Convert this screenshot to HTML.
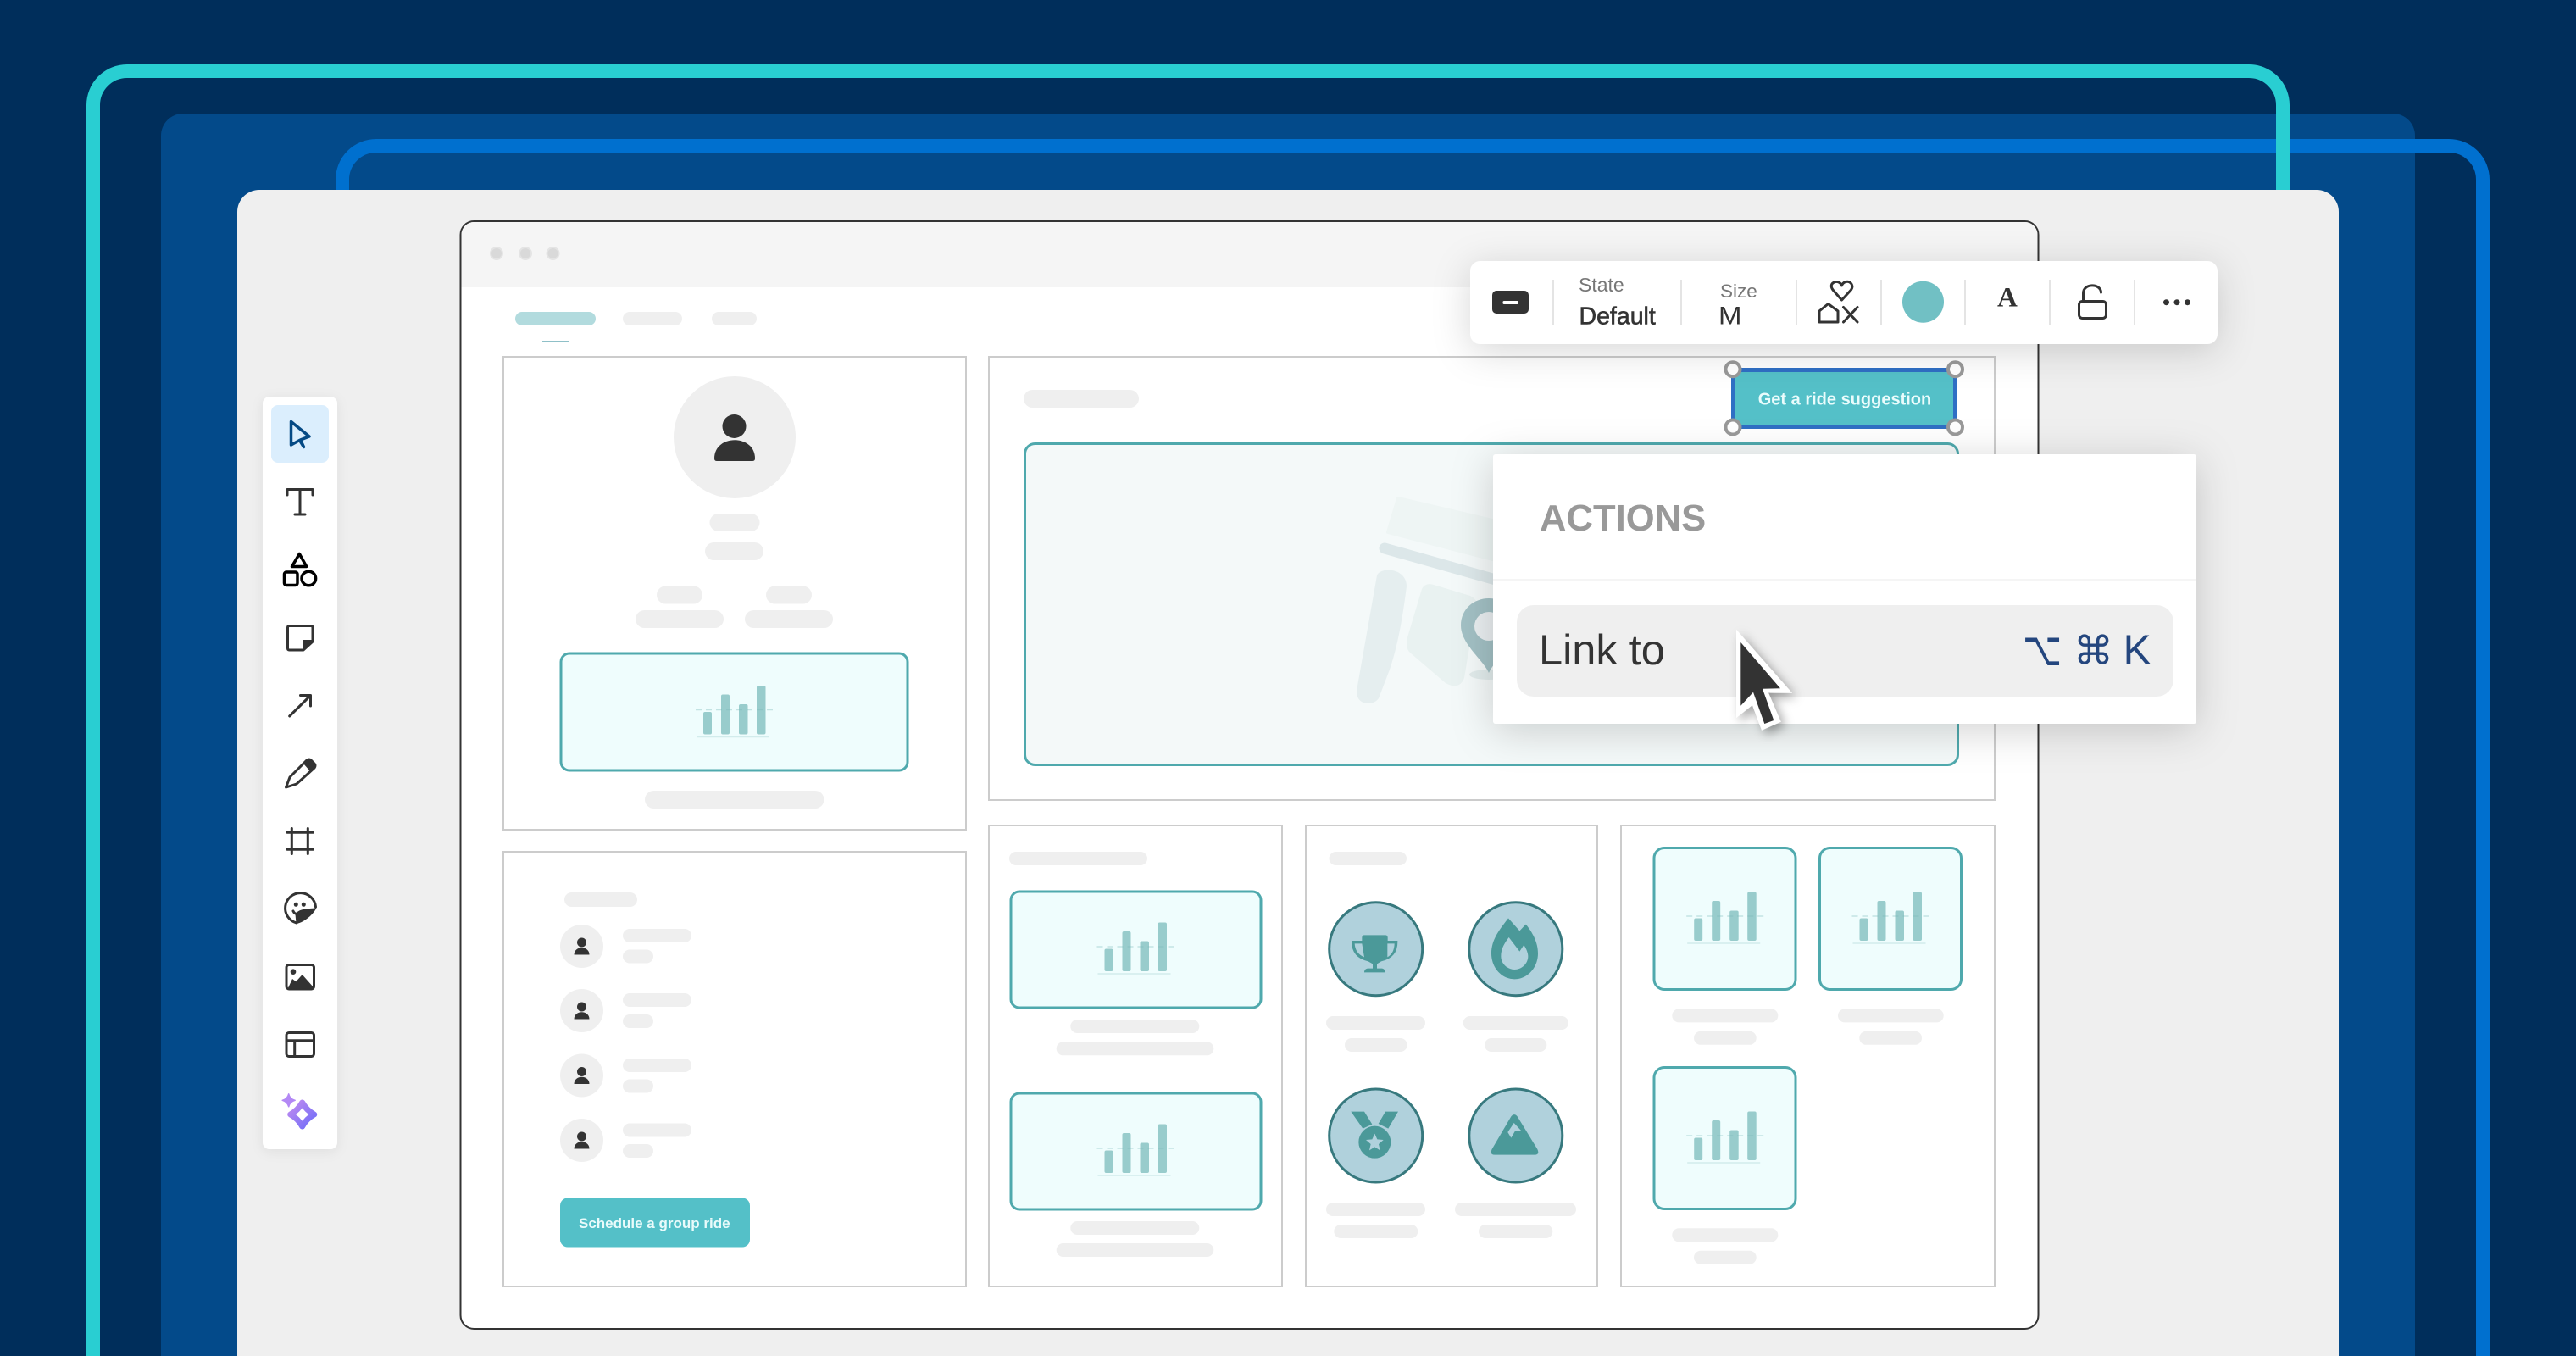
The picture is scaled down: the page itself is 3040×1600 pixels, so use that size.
<!DOCTYPE html>
<html lang="en">
<head>
<meta charset="utf-8">
<title>Wireframe editor</title>
<style>
html,body{margin:0;padding:0;background:#002e5b;width:3040px;height:1600px;overflow:hidden}
svg{display:block;font-family:"Liberation Sans",sans-serif}
.p{fill:#efefef}
.box{fill:#effdfd;stroke:#4fa9ad;stroke-width:3}
.pn{fill:#fff;stroke:#ccc;stroke-width:2}
.ic{fill:none;stroke:#333;stroke-width:3;stroke-linecap:round;stroke-linejoin:round}
.b{fill:#b0d1dc;stroke:#37797e;stroke-width:3}
.bi{fill:#4b9999}
.h{fill:#fff;stroke:#999;stroke-width:4}
</style>
</head>
<body>
<svg xmlns="http://www.w3.org/2000/svg" width="3040" height="1600" viewBox="0 0 3040 1600">
<defs>
<filter id="s1" x="-20%" y="-60%" width="140%" height="220%"><feDropShadow dx="0" dy="8" stdDeviation="22" flood-color="#000" flood-opacity=".16"/></filter>
<filter id="s2" x="-20%" y="-30%" width="140%" height="160%"><feDropShadow dx="0" dy="8" stdDeviation="24" flood-color="#000" flood-opacity=".18"/></filter>
<filter id="s3" x="-40%" y="-5%" width="180%" height="110%"><feDropShadow dx="0" dy="3" stdDeviation="7" flood-color="#000" flood-opacity=".07"/></filter>
<filter id="s4" x="-50%" y="-50%" width="200%" height="200%"><feDropShadow dx="5" dy="5" stdDeviation="6" flood-color="#000" flood-opacity=".35"/></filter>
<linearGradient id="g" x1="0" y1="0" x2="1" y2="1"><stop offset="0" stop-color="#c08cf0"/><stop offset="1" stop-color="#6f6cf8"/></linearGradient>
<g id="chart">
<rect x="-36.5" y="0" width="10" height="26.5" rx="2" fill="#98cccc"/>
<rect x="-15.5" y="-20.5" width="10" height="47" rx="2" fill="#98cccc"/>
<rect x="5.5" y="-9" width="10.5" height="35.5" rx="2" fill="#98cccc"/>
<rect x="26.5" y="-31" width="10.5" height="57.5" rx="2" fill="#98cccc"/>
<path d="M-45.5 -2.5H46" stroke="#79b9b9" stroke-opacity=".38" stroke-width="1.5" stroke-dasharray="7 5" fill="none"/>
<path d="M-44.5 29.5H41.5" stroke="#d2ecec" stroke-width="1.5" fill="none"/>
</g>
<g id="av">
<circle cx="0" cy="0" r="25.5" class="p" />
<circle cx="0" cy="-4.5" r="5.5" fill="#333"/>
<path d="M-9 10C-9 -1 9 -1 9 10Z" fill="#333"/>
</g>
</defs>

<rect width="3040" height="1600" fill="#002e5b"/>
<path d="M190 1600V160a26 26 0 0 1 26-26H2824a26 26 0 0 1 26 26V1600Z" fill="#034a8a"/>
<path d="M404 1600V212a40 40 0 0 1 40-40H2890a40 40 0 0 1 40 40V1600" fill="none" stroke="#0070cf" stroke-width="16"/>
<path d="M110 1600V124a40 40 0 0 1 40-40H2654a40 40 0 0 1 40 40V1600" fill="none" stroke="#29ced2" stroke-width="16"/>
<path d="M280 1600V250a26 26 0 0 1 26-26H2734a26 26 0 0 1 26 26V1600Z" fill="#efefef"/>

<!-- browser window -->
<rect x="543.5" y="261" width="1862" height="1307" rx="16" fill="#fff" stroke="#333" stroke-width="2"/>
<path d="M544.5 339V277a15 15 0 0 1 15-15H2389.5a15 15 0 0 1 15 15V339Z" fill="#f5f5f5"/>
<g fill="#d9d9d9" stroke="#e4e4e4" stroke-width="2"><circle cx="586" cy="299" r="7"/><circle cx="620" cy="299" r="7"/><circle cx="652.5" cy="299" r="7"/></g>
<rect x="608" y="368" width="95" height="16" rx="8" fill="#b2dbde"/>
<rect x="735" y="368" width="70" height="16" rx="8" class="p"/>
<rect x="840" y="368" width="53" height="16" rx="8" class="p"/>
<rect x="640" y="402" width="32" height="2" fill="#8fc0c8"/>

<!-- panel 1 -->
<rect x="594" y="421" width="546" height="558" class="pn"/>
<circle cx="867" cy="516" r="72" class="p"/>
<circle cx="866.5" cy="503" r="14" fill="#333"/>
<path d="M843 541C843 512 891 512 891 541Q891 544 888 544H846Q843 544 843 541Z" fill="#333"/>
<rect x="837.5" y="606" width="59" height="21" rx="10.5" class="p"/>
<rect x="832" y="640" width="69" height="21" rx="10.5" class="p"/>
<rect x="775" y="691.5" width="54" height="21" rx="10.5" class="p"/>
<rect x="904" y="691.5" width="54" height="21" rx="10.5" class="p"/>
<rect x="750" y="720" width="104" height="21" rx="10.5" class="p"/>
<rect x="879" y="720" width="104" height="21" rx="10.5" class="p"/>
<rect x="662" y="771" width="409" height="138" rx="10" class="box"/>
<use href="#chart" x="866.5" y="840"/>
<rect x="761" y="933" width="211.5" height="21" rx="10.5" class="p"/>

<!-- panel 2 -->
<rect x="594" y="1005" width="546" height="513" class="pn"/>
<rect x="666" y="1053" width="86" height="17" rx="8.5" class="p"/>
<use href="#av" x="686.5" y="1116.5"/>
<use href="#av" x="686.5" y="1192.5"/>
<use href="#av" x="686.5" y="1269"/>
<use href="#av" x="686.5" y="1345.5"/>
<rect x="735" y="1096" width="81" height="16" rx="8" class="p"/><rect x="735" y="1120.5" width="36" height="16" rx="8" class="p"/>
<rect x="735" y="1172" width="81" height="16" rx="8" class="p"/><rect x="735" y="1197" width="36" height="16" rx="8" class="p"/>
<rect x="735" y="1249" width="81" height="16" rx="8" class="p"/><rect x="735" y="1273.5" width="36" height="16" rx="8" class="p"/>
<rect x="735" y="1325.5" width="81" height="16" rx="8" class="p"/><rect x="735" y="1350" width="36" height="16" rx="8" class="p"/>
<rect x="661" y="1413.5" width="224" height="58" rx="9" fill="#54c0c8"/>
<text x="683" y="1449" font-size="17" font-weight="700" fill="#e9fbfb">Schedule a group ride</text>

<!-- panel 3 -->
<rect x="1167" y="421" width="1187" height="523" class="pn"/>
<rect x="1208" y="460" width="136" height="21" rx="10.5" class="p"/>
<rect x="1209.5" y="523.5" width="1101" height="379" rx="12" fill="#f4f9f9" stroke="#4fa9ad" stroke-width="3"/>
<path d="M1650 588L1638 628L1761 660V614Z" fill="#eef5f4" stroke="#eef5f4" stroke-width="4" stroke-linejoin="round"/>
<path d="M1634 647L1765 684" stroke="#dce7e9" stroke-width="13" stroke-linecap="round"/>
<path d="M1625 679C1628 669 1660 669 1660 692C1655 730 1650 760 1640 790L1627 824C1620 834 1600 832 1601 815Z" fill="#e5eeef"/>
<path d="M1678 695Q1682 687 1692 690L1735 703Q1745 708 1742 716L1728 800Q1722 815 1706 806L1664 770Q1658 764 1661 752Z" fill="#e9f2f1"/>
<ellipse cx="1757" cy="796" rx="23" ry="6" fill="#e1ebeb"/>
<path d="M1757 794C1750 778 1724 760 1724 738C1724 718 1740 706 1757 706C1774 706 1790 718 1790 738C1790 760 1764 778 1757 794Z" fill="#a2c0c4"/>
<circle cx="1757" cy="739" r="17" fill="#e9eef0"/>

<!-- panel 4 -->
<rect x="1167" y="974" width="346" height="544" class="pn"/>
<rect x="1191" y="1005" width="163" height="16" rx="8" class="p"/>
<rect x="1193" y="1052" width="295" height="137" rx="10" class="box"/>
<use href="#chart" x="1340" y="1119.5"/>
<rect x="1263.3" y="1203" width="152" height="16" rx="8" class="p"/>
<rect x="1246.7" y="1229.3" width="185.6" height="16" rx="8" class="p"/>
<rect x="1193" y="1290" width="295" height="137" rx="10" class="box"/>
<use href="#chart" x="1340" y="1357.5"/>
<rect x="1263.3" y="1441" width="152" height="16" rx="8" class="p"/>
<rect x="1246.7" y="1467" width="185.6" height="16" rx="8" class="p"/>

<!-- panel 5 -->
<rect x="1541" y="974" width="344" height="544" class="pn"/>
<rect x="1568.5" y="1005" width="91.5" height="16" rx="8" class="p"/>
<circle cx="1623.7" cy="1119.7" r="55" class="b"/>
<circle cx="1788.8" cy="1119.7" r="55" class="b"/>
<circle cx="1623.7" cy="1340" r="55" class="b"/>
<circle cx="1788.8" cy="1340" r="55" class="b"/>
<g transform="translate(1530 1030) scale(.33333)">
<path class="bi" d="M240 220H315Q322 220 323 228V240H358Q360 300 300 313L285 322V338H303Q314 340 314 352H240Q240 340 252 338H270V322L254 313Q194 300 195 240H232V228Q233 220 240 220ZM232 250H206Q208 285 240 298ZM322 250V298Q346 285 347 250Z" fill-rule="evenodd"/>
<path class="bi" d="M750 160L790 205L812 182C835 210 855 245 855 285C855 335 818 376 772 376C726 376 690 335 690 285C690 235 720 200 750 160Z"/>
<path fill="#b0d1dc" d="M752 228L790 278L805 255C815 270 820 285 820 295C820 320 798 342 772 342C746 342 724 320 724 295C724 270 735 250 752 228Z"/>
<path class="bi" d="M193 845H240L268 890L235 905ZM315 845H360L325 905L290 888Z"/>
<circle class="bi" cx="277" cy="953" r="57"/>
<path fill="#b0d1dc" d="M277 923L286 943L308 945L291 960L296 982L277 970L258 982L263 960L246 945L268 943Z"/>
<path class="bi" d="M760 862Q771 849 782 862L853 978Q862 998 843 998H702Q683 998 692 978Z"/>
<path fill="#b0d1dc" d="M770 885L795 912H775L760 938L748 918Z"/>
</g>
<rect x="1565" y="1199" width="117" height="16" rx="8" class="p"/><rect x="1587" y="1225" width="73.7" height="16" rx="8" class="p"/>
<rect x="1726.7" y="1199" width="124.3" height="16" rx="8" class="p"/><rect x="1752" y="1225" width="73.3" height="16" rx="8" class="p"/>
<rect x="1565" y="1419" width="117" height="16" rx="8" class="p"/><rect x="1574.3" y="1445" width="99" height="16" rx="8" class="p"/>
<rect x="1717" y="1419" width="143" height="16" rx="8" class="p"/><rect x="1745" y="1445" width="87.3" height="16" rx="8" class="p"/>

<!-- panel 6 -->
<rect x="1913" y="974" width="441" height="544" class="pn"/>
<rect x="1952" y="1000.5" width="167" height="167" rx="12" class="box"/>
<use href="#chart" x="2035.7" y="1083.5"/>
<rect x="2147.5" y="1000.5" width="167" height="167" rx="12" class="box"/>
<use href="#chart" x="2231" y="1083.5"/>
<rect x="1952" y="1259.5" width="167" height="167" rx="12" class="box"/>
<use href="#chart" x="2035.7" y="1342.5"/>
<rect x="1973.3" y="1190.4" width="125" height="16" rx="8" class="p"/><rect x="1999" y="1216.8" width="73.7" height="16" rx="8" class="p"/>
<rect x="2169" y="1190.4" width="124.7" height="16" rx="8" class="p"/><rect x="2194.3" y="1216.8" width="73.7" height="16" rx="8" class="p"/>
<rect x="1973.3" y="1449.3" width="125" height="16" rx="8" class="p"/><rect x="1999" y="1475.7" width="73.7" height="16" rx="8" class="p"/>

<!-- selected button -->
<rect x="2045.5" y="436.5" width="262" height="67" fill="#54c0c8" stroke="#2f6fc4" stroke-width="5"/>
<text x="2177" y="477.5" text-anchor="middle" font-size="20" font-weight="700" fill="#eafcfc">Get a ride suggestion</text>
<circle cx="2045" cy="435.7" r="8.5" class="h"/>
<circle cx="2307.5" cy="435.7" r="8.5" class="h"/>
<circle cx="2045" cy="504" r="8.5" class="h"/>
<circle cx="2307.5" cy="504" r="8.5" class="h"/>

<!-- context toolbar -->
<rect x="1735" y="308" width="882" height="98" rx="12" fill="#fff" filter="url(#s1)"/>
<rect x="1761" y="343" width="43" height="27" rx="5" fill="#333"/>
<rect x="1773.5" y="355" width="18.5" height="4" rx="1.5" fill="#fff"/>
<g fill="#e4e4e4"><rect x="1832" y="330" width="2" height="54"/><rect x="1983" y="330" width="2" height="54"/><rect x="2119" y="330" width="2" height="54"/><rect x="2219" y="330" width="2" height="54"/><rect x="2318" y="330" width="2" height="54"/><rect x="2418" y="330" width="2" height="54"/><rect x="2518" y="330" width="2" height="54"/></g>
<text x="1863" y="344" font-size="23" fill="#777">State</text>
<text x="1863.5" y="382.5" font-size="28.5" fill="#333" stroke="#333" stroke-width=".6">Default</text>
<text x="2030" y="351" font-size="22.5" fill="#777">Size</text>
<text transform="translate(2028 382.5) scale(1.1 1)" x="0" y="0" font-size="30" fill="#333" font-weight="400">M</text>
<path class="ic" stroke-width="3.5" d="M2173.5 354L2163 342C2158 335 2165 331 2170 333C2172 334 2173.5 336 2173.5 337C2174 335 2176 333 2178 332.5C2184 331 2188 337 2184.5 342Z"/>
<path class="ic" d="M2147 380V367L2157.5 358.5L2169 367V380Z"/>
<path class="ic" d="M2175.5 362.5L2192 380M2192 362.5L2175.5 380"/>
<circle cx="2269.5" cy="356.3" r="24.5" fill="#71c0c4"/>
<text x="2357" y="361.7" font-family="'Liberation Serif',serif" font-size="33" font-weight="700" fill="#333">A</text>
<rect x="2453.5" y="355.5" width="32" height="20" rx="4" class="ic"/>
<path class="ic" d="M2458.5 355V346C2458.5 334 2479 334 2479.5 345"/>
<g fill="#333"><circle cx="2556.5" cy="356.7" r="3.5"/><circle cx="2569" cy="356.7" r="3.5"/><circle cx="2581.5" cy="356.7" r="3.5"/></g>

<!-- actions popup -->
<rect x="1762" y="536" width="830" height="318" rx="3" fill="#fff" filter="url(#s2)"/>
<text x="1817" y="626" font-size="43.600" font-weight="700" fill="#999">ACTIONS</text>
<rect x="1762" y="683" width="830" height="3" fill="#f5f5f5"/>
<rect x="1790" y="714" width="775" height="108" rx="20" fill="#efefef"/>
<text x="1816" y="784" font-size="50.500" fill="#333">Link to</text>
<text transform="translate(2387 785) scale(.85 1.2)" x="0" y="0" font-family="'DejaVu Sans',sans-serif" font-size="47" fill="#24467e">⌥</text>
<text x="2447" y="784" font-family="'DejaVu Sans',sans-serif" font-size="47" fill="#24467e">⌘</text>
<text x="2505.5" y="784" font-size="50" fill="#24467e">K</text>

<!-- mouse cursor -->
<path d="M2049 742.7V847L2068 832L2079 861.7L2101.7 851.7L2087 817.5L2115 817.7Z" fill="#fff" filter="url(#s4)"/>
<path d="M2054.3 758V832.7L2069 816.7L2082.3 854L2093.3 850L2080 812.7L2101 812.3Z" fill="#333"/>

<!-- left tool rail -->
<rect x="310" y="468" width="88" height="888" rx="8" fill="#fff" filter="url(#s3)"/>
<rect x="320" y="478" width="68" height="68" rx="8" fill="#dbeefd"/>
<path d="M343.5 497.5L365 515L354.5 519L358.5 527.5L353.5 519.5L343.5 525Z" fill="none" stroke="#054a85" stroke-width="3.5" stroke-linejoin="round" stroke-linecap="round"/>
<path class="ic" d="M339 584V577.5H369V584M354 577.5V607M348 607H360"/>
<g fill="none" stroke="#000" stroke-width="3.5" stroke-linejoin="round">
<path d="M353.3 653.5L361.7 668.5H344.5Z"/>
<rect x="335.5" y="675" width="15.5" height="15.5" rx="2.5"/>
<circle cx="364.3" cy="682.5" r="8.3"/>
</g>
<path class="ic" stroke-width="3.5" d="M369 757V740.5Q369 738.5 367 738.5H341.500Q339.5 738.5 339.5 740.5V765Q339.5 767 341.5 767H358Z"/>
<path d="M369 756L358 767V756Z" fill="#333" stroke="#333" stroke-width="2" stroke-linejoin="round"/>
<path class="ic" d="M341.7 845L366 821M354.5 820.5H366.5V833"/>
<path class="ic" d="M337.5 929L342 917L362 897Q365 895 367 897L371 901Q373 903 371 906L350 925Z"/>
<path d="M362 897Q365 895 367 897L371 901Q373 903 371 906L366 910L358 901Z" fill="#333"/>
<path class="ic" stroke-width="3.500" d="M339 982.3H369.5M339 1002.3H369.5M344.3 977.5V1007.5M363.3 977.5V1007.5"/>
<path class="ic" d="M372.5 1070A18 18 0 1 0 350 1089"/>
<path d="M372.7 1071.7C365 1073 353 1072 349 1079L350 1089.500C358 1088 368 1080 372.7 1071.7Z" fill="#333" stroke="#333" stroke-linejoin="round"/>
<circle cx="349.3" cy="1067.3" r="2.5" fill="#333"/><circle cx="358.3" cy="1067.3" r="2.5" fill="#333"/>
<path class="ic" d="M346 1075Q348 1079 350.5 1078"/>
<rect x="338" y="1138.500" width="32.5" height="28.5" rx="3" class="ic"/>
<circle cx="346" cy="1146.7" r="3.3" fill="#333"/>
<path d="M339.5 1166.7L345 1155L349.3 1158.3L356.7 1150L370 1165V1167Z" fill="#333"/>
<rect x="338" y="1218.5" width="32.5" height="28" rx="3" class="ic"/>
<path class="ic" d="M338 1227.7H370.5M347.7 1227.700V1246.5"/>
<path d="M356.7 1301Q361.7 1310 370.7 1315Q361.7 1320 356.7 1329Q351.7 1320 342.7 1315Q351.7 1310 356.7 1301Z" fill="#fff" stroke="url(#g)" stroke-width="7" stroke-linejoin="round"/>
<path d="M340.7 1290.8Q342 1297 348.2 1298.3Q342 1300 340.7 1305.8Q339 1300 333.2 1298.3Q339 1297 340.7 1290.8Z" fill="#b388f5" stroke="#b388f5" stroke-width="1.5" stroke-linejoin="round"/>
</svg>
</body>
</html>
